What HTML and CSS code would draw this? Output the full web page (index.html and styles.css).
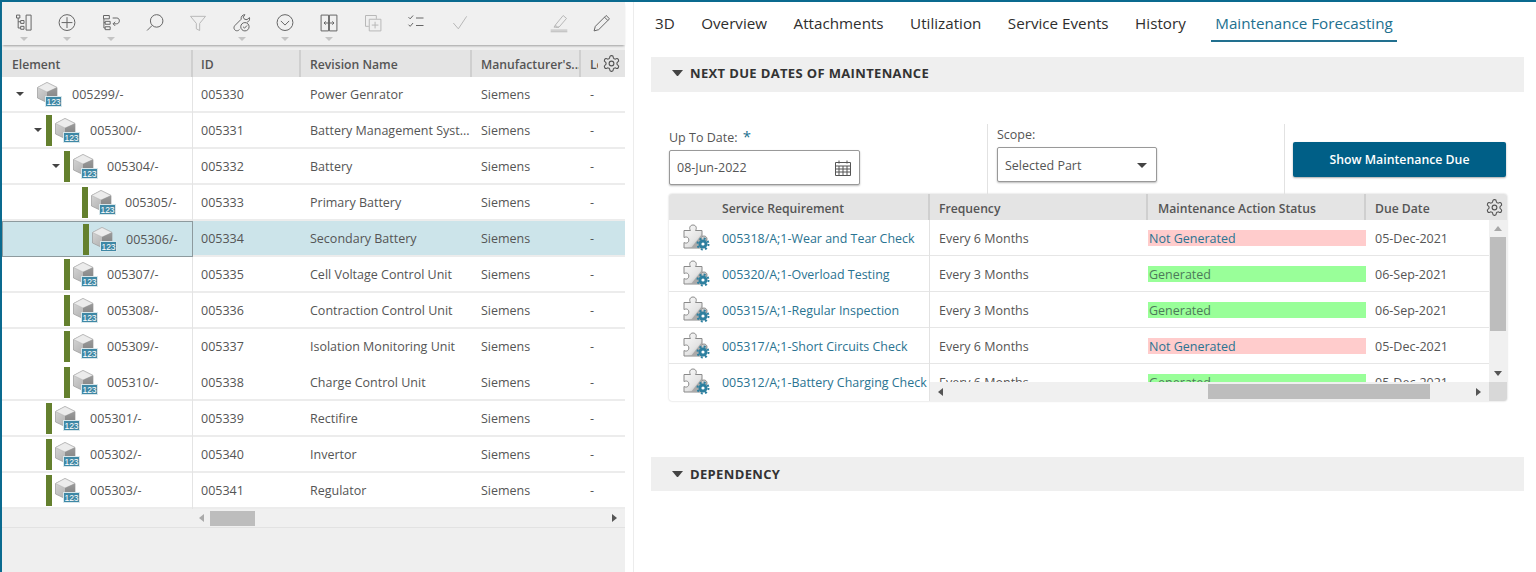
FILE: index.html
```html
<!DOCTYPE html>
<html lang="en">
<head>
<meta charset="utf-8">
<title>Maintenance Forecasting</title>
<link rel="stylesheet" href="styles.css">
</head>
<body>
<svg class="defs" width="0" height="0" aria-hidden="true">
  <defs>
    <linearGradient id="cubeL" x1="0" y1="0" x2="1" y2="1"><stop offset="0" stop-color="#d9d9d9"/><stop offset="1" stop-color="#a5a5a5"/></linearGradient>
    <linearGradient id="cubeR" x1="0" y1="0" x2="0" y2="1"><stop offset="0" stop-color="#9b9b9b"/><stop offset="1" stop-color="#7d7d7d"/></linearGradient>
    <linearGradient id="puz" x1="0" y1="0" x2="1" y2="1"><stop offset="0" stop-color="#fbfbfb"/><stop offset=".55" stop-color="#e4e4e4"/><stop offset="1" stop-color="#9a9a9a"/></linearGradient>
    <symbol id="cube" viewBox="0 0 25 25">
      <path d="M10 .5 20 5.500 20 16 10 20.500 0.500 16 0.500 5.500Z" fill="url(#cubeL)" stroke="#9a9a9a" stroke-width=".7"/>
      <path d="M10 .5 20 5.500 10 10 .5 5.500Z" fill="#ececec" stroke="#b5b5b5" stroke-width=".6"/>
      <path d="M10 10 20 5.500 20 16 10 20.500Z" fill="url(#cubeR)"/>
      <rect x="8" y="14" width="17" height="11" fill="#d8e6ea"/>
      <rect x="9" y="15" width="15" height="9" fill="#3f88a5"/>
      <text x="16.500" y="22.800" class="cube-num" text-anchor="middle">123</text>
    </symbol>
    <symbol id="puzzle" viewBox="0 0 27 27">
      <path d="M1 6.500h6.500c-1.800-2.600-.4-5.500 2.500-5.500s4.300 2.900 2.500 5.500H19v6c2.500-1.200 5 0 5 2.600s-2.500 3.600-5 2.600V24H1v-5.500c2.300 1.300 4.800.3 4.800-2.500S3.300 12.300 1 13.600Z" fill="url(#puz)" stroke="#8a8a8a" stroke-width="1"/>
      <path d="M8 24 19 10v14Z" fill="#a9a9a9"/>
      <circle cx="20" cy="20" r="4.500" fill="#2d7f9f"/>
      <circle cx="20" cy="20" r="5.500" fill="none" stroke="#2d7f9f" stroke-width="2" stroke-dasharray="2 2.320"/>
      <circle cx="20" cy="20" r="1.600" fill="#fff"/>
    </symbol>
    <symbol id="gear" viewBox="0 0 24 24">
      <path d="M12.220 2h-.44a2 2 0 0 0-2 2v.18a2 2 0 0 1-1 1.730l-.43.25a2 2 0 0 1-2 0l-.15-.08a2 2 0 0 0-2.730.73l-.22.38a2 2 0 0 0 .73 2.730l.15.1a2 2 0 0 1 1 1.720v.51a2 2 0 0 1-1 1.740l-.15.09a2 2 0 0 0-.73 2.730l.22.38a2 2 0 0 0 2.730.73l.15-.08a2 2 0 0 1 2 0l.43.25a2 2 0 0 1 1 1.730V20a2 2 0 0 0 2 2h.44a2 2 0 0 0 2-2v-.18a2 2 0 0 1 1-1.730l.43-.25a2 2 0 0 1 2 0l.15.08a2 2 0 0 0 2.730-.73l.22-.39a2 2 0 0 0-.73-2.730l-.15-.08a2 2 0 0 1-1-1.740v-.5a2 2 0 0 1 1-1.740l.15-.09a2 2 0 0 0 .73-2.730l-.22-.38a2 2 0 0 0-2.730-.73l-.15.08a2 2 0 0 1-2 0l-.43-.25a2 2 0 0 1-1-1.730V4a2 2 0 0 0-2-2z" fill="none" stroke="#555" stroke-width="1.400"/>
      <circle cx="12" cy="12" r="3" fill="none" stroke="#555" stroke-width="1.400"/>
    </symbol>
  </defs>
</svg>

<div class="app">
  <section class="left-pane">
    <div class="toolbar">
      <div class="tool has-menu"><svg viewBox="0 0 24 24"><path d="M3 2.500h4v3.500H3zM8 9h4v3.500H8zM8 16h4v3.500H8zM5 6v12h3M5 10.500h3M14.500 2.500h6v18h-6z"/></svg></div>
      <div class="tool has-menu"><svg viewBox="0 0 24 24"><circle cx="12" cy="11.500" r="9.500"/><path d="M12 5v13M5.500 11.500h13"/></svg></div>
      <div class="tool has-menu"><svg viewBox="0 0 24 24"><path d="M3 3h7v4H3zM5 10h6v3.500H5zM5 16.500h6V20H5zM3.500 7v11H5M3.500 11.500H5M14 6h5c2.500 0 3 2 3 3.500s-1 3.500-3.500 3.500H15M17 10.500 14.500 13l2.500 2.500"/></svg></div>
      <div class="tool"><svg viewBox="0 0 24 24"><circle cx="14" cy="9.500" r="7.500"/><path d="M8.500 15 2.500 21"/></svg></div>
      <div class="tool off"><svg viewBox="0 0 24 24"><path d="M3 4h18l-7 8.500V21l-4-2v-6.500Z"/></svg></div>
      <div class="tool has-menu"><svg viewBox="0 0 24 24"><path d="M15.500 2c-3 0-5 2.500-4.500 5.500L3.500 15c-2.200 2.200-1 6 2 6.300 1.500.1 2.600-.4 3.500-1.500M15.500 2l-2 3 1.500 2.500 3 .5 3-2.500c.6 2.600-.6 4.800-2.800 5.500"/><circle cx="15.500" cy="16.500" r="5"/><path d="m13.300 16.500 1.700 1.700 3-3.200"/></svg></div>
      <div class="tool has-menu"><svg viewBox="0 0 24 24"><circle cx="12" cy="11.500" r="9.500"/><path d="m7 9.500 5 5 5-5"/></svg></div>
      <div class="tool has-menu"><svg viewBox="0 0 24 24"><path d="M2.500 2.500h9v19h-9zM12.500 2.500h9v19h-9zM6 12h12M8 10l-2 2 2 2M16 10l2 2-2 2"/></svg></div>
      <div class="tool off"><svg viewBox="0 0 24 24"><path d="M3 3h13v4M3 3v13h4M7.500 7.500h14v14h-14zM14.500 10.500v8M10.500 14.500h8"/></svg></div>
      <div class="tool"><svg viewBox="0 0 24 24"><path d="m3 5 2 2 3.500-4M3 14l2 2 3.500-4M12 6h9M12 15h9"/></svg></div>
      <div class="tool off"><svg viewBox="0 0 24 24"><path d="m4 12 6 7L20 4"/></svg></div>
      <div class="tool-gap"></div>
      <div class="tool off"><svg viewBox="0 0 24 24"><path d="M8 14 17 3l4 3.500L12 17H8.500ZM8 14l-2 3h6M2 20.500h20M2 22.500h20"/></svg></div>
      <div class="tool"><svg viewBox="0 0 24 24"><path d="M4 16 17 3l4 4L8 20l-5.500 1.500ZM15 5l4 4"/></svg></div>
    </div>

    <div class="tree-grid">
      <div class="head-row">
        <div class="c-el">Element</div>
        <div class="c-id">ID</div>
        <div class="c-rev">Revision Name</div>
        <div class="c-man">Manufacturer's...</div>
        <div class="c-lc"><span>Lc</span></div>
        <svg class="gear tree-gear"><use href="#gear"/></svg>
      </div>

      <div class="row">
        <div class="c-el tree lvl0"><i class="twist"></i><i class="bar none"></i><svg class="cube"><use href="#cube"/></svg><span>005299/-</span></div>
        <div class="c-id">005330</div><div class="c-rev">Power Genrator</div><div class="c-man">Siemens</div><div class="c-lc">-</div>
      </div>
      <div class="row">
        <div class="c-el tree lvl1"><i class="twist"></i><i class="bar"></i><svg class="cube"><use href="#cube"/></svg><span>005300/-</span></div>
        <div class="c-id">005331</div><div class="c-rev">Battery Management Syst...</div><div class="c-man">Siemens</div><div class="c-lc">-</div>
      </div>
      <div class="row">
        <div class="c-el tree lvl2"><i class="twist"></i><i class="bar"></i><svg class="cube"><use href="#cube"/></svg><span>005304/-</span></div>
        <div class="c-id">005332</div><div class="c-rev">Battery</div><div class="c-man">Siemens</div><div class="c-lc">-</div>
      </div>
      <div class="row">
        <div class="c-el tree lvl3"><i class="twist none"></i><i class="bar"></i><svg class="cube"><use href="#cube"/></svg><span>005305/-</span></div>
        <div class="c-id">005333</div><div class="c-rev">Primary Battery</div><div class="c-man">Siemens</div><div class="c-lc">-</div>
      </div>
      <div class="row selected">
        <div class="c-el tree lvl3"><i class="twist none"></i><i class="bar"></i><svg class="cube"><use href="#cube"/></svg><span>005306/-</span></div>
        <div class="c-id">005334</div><div class="c-rev">Secondary Battery</div><div class="c-man">Siemens</div><div class="c-lc">-</div>
      </div>
      <div class="row">
        <div class="c-el tree lvl2"><i class="twist none"></i><i class="bar"></i><svg class="cube"><use href="#cube"/></svg><span>005307/-</span></div>
        <div class="c-id">005335</div><div class="c-rev">Cell Voltage Control Unit</div><div class="c-man">Siemens</div><div class="c-lc">-</div>
      </div>
      <div class="row">
        <div class="c-el tree lvl2"><i class="twist none"></i><i class="bar"></i><svg class="cube"><use href="#cube"/></svg><span>005308/-</span></div>
        <div class="c-id">005336</div><div class="c-rev">Contraction Control Unit</div><div class="c-man">Siemens</div><div class="c-lc">-</div>
      </div>
      <div class="row noline">
        <div class="c-el tree lvl2"><i class="twist none"></i><i class="bar"></i><svg class="cube"><use href="#cube"/></svg><span>005309/-</span></div>
        <div class="c-id">005337</div><div class="c-rev">Isolation Monitoring Unit</div><div class="c-man">Siemens</div><div class="c-lc">-</div>
      </div>
      <div class="row">
        <div class="c-el tree lvl2"><i class="twist none"></i><i class="bar"></i><svg class="cube"><use href="#cube"/></svg><span>005310/-</span></div>
        <div class="c-id">005338</div><div class="c-rev">Charge Control Unit</div><div class="c-man">Siemens</div><div class="c-lc">-</div>
      </div>
      <div class="row">
        <div class="c-el tree lvl1"><i class="twist none"></i><i class="bar"></i><svg class="cube"><use href="#cube"/></svg><span>005301/-</span></div>
        <div class="c-id">005339</div><div class="c-rev">Rectifire</div><div class="c-man">Siemens</div><div class="c-lc">-</div>
      </div>
      <div class="row">
        <div class="c-el tree lvl1"><i class="twist none"></i><i class="bar"></i><svg class="cube"><use href="#cube"/></svg><span>005302/-</span></div>
        <div class="c-id">005340</div><div class="c-rev">Invertor</div><div class="c-man">Siemens</div><div class="c-lc">-</div>
      </div>
      <div class="row">
        <div class="c-el tree lvl1"><i class="twist none"></i><i class="bar"></i><svg class="cube"><use href="#cube"/></svg><span>005303/-</span></div>
        <div class="c-id">005341</div><div class="c-rev">Regulator</div><div class="c-man">Siemens</div><div class="c-lc">-</div>
      </div>

      <div class="tree-scroll">
        <i class="arrow left muted"></i>
        <div class="tree-track"><div class="thumb tree-thumb"></div></div>
        <i class="arrow right"></i>
      </div>
    </div>
  </section>

  <div class="divider"></div>

  <main class="right-pane">
    <nav class="tabs">
      <a class="tab">3D</a>
      <a class="tab">Overview</a>
      <a class="tab">Attachments</a>
      <a class="tab">Utilization</a>
      <a class="tab">Service Events</a>
      <a class="tab">History</a>
      <a class="tab active">Maintenance Forecasting</a>
    </nav>

    <div class="section-bar"><i class="sec-caret"></i>NEXT DUE DATES OF MAINTENANCE</div>

    <div class="form-row">
      <div class="field f-date">
        <label>Up To Date: <b class="req">*</b></label>
        <div class="input">08-Jun-2022
          <svg class="cal" viewBox="0 0 18 18"><path d="M1.500 3.500h15v13h-15zM1.500 7h15M1.500 10h15M1.500 13h15M5 7v9.500M9 7v9.500M13 7v9.500M5 1.500v3M13 1.500v3"/></svg>
        </div>
      </div>
      <div class="field f-scope">
        <label>Scope:</label>
        <div class="input">Selected Part<i class="sel-caret"></i></div>
      </div>
      <div class="field f-btn">
        <button class="primary">Show Maintenance Due</button>
      </div>
    </div>

    <div class="mgrid">
      <div class="frozen">
        <div class="mhead"><div class="m-req">Service Requirement</div></div>
        <div class="mrow"><svg class="puzzle"><use href="#puzzle"/></svg><a>005318/A;1-Wear and Tear Check</a></div>
        <div class="mrow"><svg class="puzzle"><use href="#puzzle"/></svg><a>005320/A;1-Overload Testing</a></div>
        <div class="mrow"><svg class="puzzle"><use href="#puzzle"/></svg><a>005315/A;1-Regular Inspection</a></div>
        <div class="mrow"><svg class="puzzle"><use href="#puzzle"/></svg><a>005317/A;1-Short Circuits Check</a></div>
        <div class="mrow"><svg class="puzzle"><use href="#puzzle"/></svg><a>005312/A;1-Battery Charging Check</a></div>
      </div>
      <div class="scrolling">
        <div class="mhead">
          <div class="m-freq">Frequency</div>
          <div class="m-stat">Maintenance Action Status</div>
          <div class="m-due">Due Date</div>
          <svg class="gear m-gear"><use href="#gear"/></svg>
        </div>
        <div class="body-wrap">
          <div class="body-rows">
            <div class="srow"><div class="m-freq">Every 6 Months</div><div class="m-stat"><span class="st no">Not Generated</span></div><div class="m-due">05-Dec-2021</div></div>
            <div class="srow"><div class="m-freq">Every 3 Months</div><div class="m-stat"><span class="st yes">Generated</span></div><div class="m-due">06-Sep-2021</div></div>
            <div class="srow"><div class="m-freq">Every 3 Months</div><div class="m-stat"><span class="st yes">Generated</span></div><div class="m-due">06-Sep-2021</div></div>
            <div class="srow"><div class="m-freq">Every 6 Months</div><div class="m-stat"><span class="st no">Not Generated</span></div><div class="m-due">05-Dec-2021</div></div>
            <div class="srow"><div class="m-freq">Every 6 Months</div><div class="m-stat"><span class="st yes">Generated</span></div><div class="m-due">05-Dec-2021</div></div>
          </div>
          <div class="vscroll">
            <i class="arrow up muted"></i>
            <div class="vtrack"><div class="thumb vthumb"></div></div>
            <i class="arrow down"></i>
          </div>
        </div>
        <div class="hscroll">
          <i class="arrow left"></i>
          <div class="htrack"><div class="thumb hthumb"></div></div>
          <i class="arrow right"></i>
          <div class="corner"></div>
        </div>
      </div>
    </div>

    <div class="section-bar dep"><i class="sec-caret"></i>DEPENDENCY</div>
  </main>
</div>
</body>
</html>
```
FILE: styles.css
```css
* { box-sizing: border-box; }
html, body { margin: 0; height: 100%; }
body {
  font-family: "Open Sans", "Noto Sans", "Liberation Sans", sans-serif;
  font-size: 12.500px;
  color: #555;
  background: #fff;
  overflow: hidden;
}
.defs { position: absolute; }
.cube-num { font: 8.500px "Liberation Sans", sans-serif; fill: #fff; }

.app {
  display: flex;
  height: 572px;
  border-top: 2px solid #0a6a8f;
  border-left: 2px solid #0a6a8f;
}

/* left */
.left-pane { width: 623px; flex: none; background: #efefef; display: flex; flex-direction: column; }
.divider { width: 9px; flex: none; background: #fff; border-right: 1px solid #ececec; }

.toolbar {
  height: 43px;
  flex: none;
  display: flex;
  background: #f0f0f0;
  box-shadow: 0 2px 2px -1px #a0a0a0;
  position: relative;
}
.tool {
  width: 43.600px;
  flex: none;
  display: flex;
  justify-content: center;
  padding-top: 11px;
  position: relative;
}
.tool svg { width: 20px; height: 20px; fill: none; stroke: #666; stroke-width: 1.200; }
.tool.off svg { stroke: #b8b8b8; }
.has-menu::after {
  content: "";
  position: absolute;
  left: 50%;
  top: 35px;
  margin-left: -4px;
  border: 4px solid transparent;
  border-top: 4px solid #c4c4c4;
  border-bottom: 0;
}
.tool-gap { flex: 1; }
.tool:last-child { margin-right: 1px; }

.tree-grid { margin-top: 5px; }
.head-row {
  display: flex;
  height: 27px;
  background: #e4e4e4;
  font-weight: 600;
  font-size: 12.200px;
  position: relative;
}
.head-row > div { display: flex; align-items: center; padding-top: 2px; border-right: 2px solid #cfcfcf; overflow: hidden; white-space: nowrap; }
.head-row > .c-lc { border-right: 0; }
.c-el { width: 191px; padding-left: 10px; flex: none; }
.c-id { width: 108px; padding-left: 8px; flex: none; }
.c-rev { width: 171px; padding-left: 9px; flex: none; }
.c-man { width: 109px; padding-left: 9px; flex: none; }
.c-lc { width: 44px; padding-left: 9px; flex: none; }
.gear { width: 19px; height: 19px; }
.tree-gear { position: absolute; right: 4px; top: 4px; background: #e4e4e4; box-shadow: -4px 0 0 #e4e4e4; }

.row {
  display: flex;
  height: 36px;
  background: #fff;
  box-shadow: inset 0 -2px 0 #ececec;
}
.row.noline { box-shadow: none; }
.row > div { display: flex; align-items: center; white-space: nowrap; overflow: hidden; padding-bottom: 2px; }
.tree { border-right: 1px solid #e4e4e4; }
.twist {
  width: 8px;
  height: 4px;
  margin: 0 1px;
  flex: none;
  border: 4px solid transparent;
  border-top: 4px solid #444;
  border-bottom: 0;
}
.tree.lvl0 { padding-left: 13px; }
.tree.lvl1 { padding-left: 31px; }
.tree.lvl2 { padding-left: 49px; }
.tree.lvl3 { padding-left: 67px; }
.twist.none { border-color: transparent; }
.bar { width: 6px; height: 31px; margin: 0 3px; flex: none; background: #64802e; }
.bar.none { background: transparent; }
.cube { width: 25px; height: 25px; margin-right: 10px; flex: none; }
.lvl2 .cube, .lvl3 .cube { margin-right: 9px; }
.selected { background: #cce4ea; }
.row.selected > .tree { border: 1px solid #8d9a9e; background: #cce4ea; padding-bottom: 0; }

.tree-scroll { display: flex; align-items: center; height: 19px; background: #f0f0f0; border-bottom: 1px solid #e2e2e2; padding-left: 197px; padding-right: 8px; }
.tree-track { flex: 1; height: 15px; padding-left: 6px; }
.thumb { background: #bdbdbd; }
.tree-thumb { width: 45px; height: 15px; }
.arrow { display: block; flex: none; width: 0; height: 0; border: 4px solid transparent; }
.arrow.left { border-left: 0; border-right: 5px solid #555; }
.arrow.right { border-right: 0; border-left: 5px solid #555; }
.arrow.up { border-top: 0; border-bottom: 5px solid #555; }
.arrow.down { border-bottom: 0; border-top: 5px solid #555; }
.arrow.left.muted { border-right-color: #aaa; }
.arrow.up.muted { border-bottom-color: #a8a8a8; }

/* right */
.right-pane { flex: 1; min-width: 0; padding: 0 12px 0 17px; background: #fff; }
.tabs { display: flex; gap: 26.500px; height: 39px; padding-left: 4px; }
.tab {
  height: 39px;
  padding-top: 11px;
  font-size: 15.200px;
  color: #2e2e2e;
  font-weight: 500;
  line-height: 20px;
  white-space: nowrap;
  position: relative;
}
.tab.active { color: #22708f; margin-left: 3px; }
.tab.active::after { content: ""; position: absolute; left: -4px; right: -4px; bottom: -1px; height: 2px; background: #22708f; }

.section-bar {
  display: flex;
  align-items: center;
  height: 35px;
  margin-top: 16px;
  padding-left: 21px;
  padding-bottom: 3px;
  background: #efefef;
  color: #333;
  font-size: 13px;
  font-weight: 700;
  letter-spacing: .35px;
}
.sec-caret {
  width: 11px;
  height: 6px;
  margin-right: 7px;
  border-left: 5.500px solid transparent;
  border-right: 5.500px solid transparent;
  border-top: 6px solid #444;
}
.section-bar.dep { margin-top: 56px; height: 34px; padding-bottom: 0; }

.form-row { display: flex; height: 68px; margin-top: 34px; margin-left: 18px; margin-right: 18px; }
.field { display: flex; flex-direction: column; flex: none; }
.field label { line-height: 18px; }
.req { color: #22708f; font-size: 15px; font-weight: 400; margin-left: 2px; }
.input {
  display: flex;
  align-items: center;
  justify-content: space-between;
  background: #fff;
  border: 1px solid #999;
  border-radius: 2px;
  box-shadow: 0 1px 2px #bbb;
  padding: 0 7px;
  height: 35px;
}
.f-date { width: 318px; padding-top: 1px; gap: 3px; }
.f-date .input { width: 191px; }
.cal { width: 18px; height: 18px; fill: none; stroke: #555; stroke-width: 1; }
.f-scope { width: 297px; padding-left: 9px; border-left: 1px solid #e2e2e2; margin-top: -2px; height: 70px; }
.f-scope label { margin-top: 2px; margin-bottom: 3px; }
.f-scope .input { width: 160px; padding-top: 2px; }
.sel-caret { width: 10px; height: 5px; margin-right: 2px; border-left: 5px solid transparent; border-right: 5px solid transparent; border-top: 5px solid #444; }
.f-btn { flex: 1; padding-left: 8px; border-left: 1px solid #e2e2e2; margin-top: -2px; height: 70px; padding-top: 18px; }
.primary {
  width: 213px;
  height: 35px;
  border: 0;
  border-radius: 2px;
  background: #005f87;
  color: #fff;
  font: 600 12.300px "Open Sans", "Noto Sans", sans-serif;
  box-shadow: 0 1px 2px #aaa;
}

.mgrid {
  display: flex;
  width: 838px;
  height: 207px;
  margin-left: 18px;
  border-radius: 3px;
  overflow: hidden;
  box-shadow: 0 0 2px #c4c4c4;
}
.frozen { width: 261px; flex: none; border-right: 1px solid #e2e2e2; }
.mhead { display: flex; height: 26px; background: #e4e4e4; font-weight: 600; font-size: 12.200px; position: relative; align-items: stretch; }
.mhead > div { display: flex; align-items: center; padding-top: 2px; border-right: 2px solid #cfcfcf; white-space: nowrap; padding-left: 9px; flex: none; }
.mhead > .m-req { width: 261px; padding-left: 53px; }
.mrow { display: flex; align-items: center; height: 36px; padding-left: 14px; box-shadow: inset 0 -1px 0 #e6e6e6; white-space: nowrap; overflow: hidden; }
.mrow:last-child { box-shadow: none; }
.mrow a { color: #2a7391; font-size: 12.450px; }
.puzzle { width: 27px; height: 27px; margin-right: 12px; margin-bottom: 1px; flex: none; }
.scrolling { flex: 1; min-width: 0; display: flex; flex-direction: column; }
.m-freq { width: 218px; flex: none; padding-left: 9px; }
.m-stat { width: 218px; flex: none; }
.m-due { flex: 1; padding-left: 9px; }
.mhead > .m-stat { padding-left: 10px; }
.mhead > .m-due { border-right: 0; }
.m-gear { position: absolute; right: 3px; top: 4px; }
.body-wrap { display: flex; height: 162px; overflow: hidden; }
.body-rows { flex: 1; min-width: 0; }
.srow { display: flex; align-items: center; height: 36px; box-shadow: inset 0 -1px 0 #e6e6e6; white-space: nowrap; }
.st { display: block; height: 16px; line-height: 17px; padding-left: 1px; color: #2a7391; }
.st.no { background: #ffcccc; }
.st.yes { background: #99ff99; color: #4d7a5a; }
.vscroll { width: 18px; flex: none; background: #f0f0f0; display: flex; flex-direction: column; align-items: center; padding: 6px 0; }
.vtrack { flex: 1; width: 100%; padding: 6px 1px 0; }
.vthumb { height: 94px; }
.hscroll { display: flex; align-items: center; height: 19px; background: #f0f0f0; padding-left: 8px; }
.htrack { flex: 1; height: 15px; padding-left: 265px; }
.hthumb { width: 222px; height: 15px; }
.hscroll .arrow.right { margin-right: 8px; }
.corner { width: 18px; height: 19px; background: #d8d8d8; flex: none; }
```
